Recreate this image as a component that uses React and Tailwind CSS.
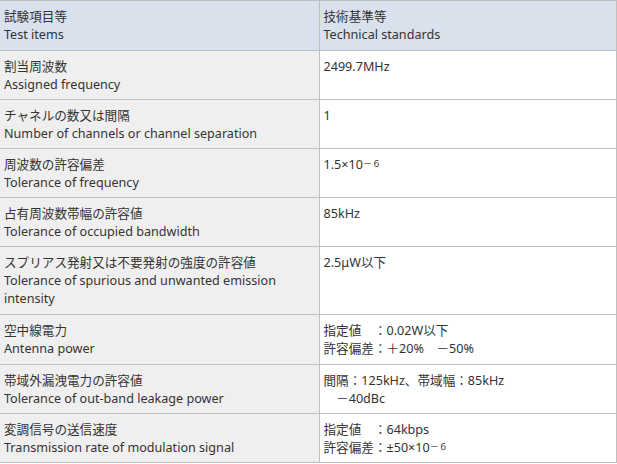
const rows = [
  { ja: "割当周波数", en: "Assigned frequency", value: ["2499.7MHz"] },
  { ja: "チャネルの数又は間隔", en: "Number of channels or channel separation", value: ["1"] },
  { ja: "周波数の許容偏差", en: "Tolerance of frequency", value: ["exp:1.5×10"] },
  { ja: "占有周波数帯幅の許容値", en: "Tolerance of occupied bandwidth", value: ["85kHz"] },
  {
    ja: "スプリアス発射又は不要発射の強度の許容値",
    en: "Tolerance of spurious and unwanted emission intensity",
    value: ["2.5μW以下"],
    tall: true,
  },
  { ja: "空中線電力", en: "Antenna power", value: ["指定値　：0.02W以下", "許容偏差：＋20%　－50%"], tall: true },
  {
    ja: "帯域外漏洩電力の許容値",
    en: "Tolerance of out-band leakage power",
    value: ["間隔：125kHz、帯域幅：85kHz", "　－40dBc"],
  },
  { ja: "変調信号の送信速度", en: "Transmission rate of modulation signal", value: ["指定値　：64kbps", "exp:許容偏差：±50×10"] },
];

function Line({ text }) {
  if (text.startsWith("exp:")) {
    return (
      <div>
        {text.slice(4)}
        <sup className="text-[9px] relative -top-[2px]">－６</sup>
      </div>
    );
  }
  return <div className="whitespace-pre">{text}</div>;
}

export default function App() {
  return (
    <div
      className="w-[617px] h-[464px] bg-white text-[#333] text-[12.6px] leading-[18px]"
      style={{ fontFamily: '"Noto Sans", "Noto Sans CJK JP", sans-serif' }}
    >
      <table className="w-[616px] border-collapse table-fixed">
        <colgroup>
          <col className="w-[319px]" />
          <col className="w-[297px]" />
        </colgroup>
        <thead>
          <tr className="bg-[#d8e1ec]">
            <th className="border-t border-b border-r border-[#c0c0c0] text-left font-normal align-top pl-[4px] pr-2 pt-[7px] pb-[6px]">
              <div>試験項目等</div>
              <div>Test items</div>
            </th>
            <th className="border-t border-b border-r border-[#c0c0c0] text-left font-normal align-top pl-[4px] pr-2 pt-[7px] pb-[6px]">
              <div>技術基準等</div>
              <div>Technical standards</div>
            </th>
          </tr>
        </thead>
        <tbody>
          {rows.map((r, i) => (
            <tr key={i}>
              <td
                className={`bg-[#efefef] border-b border-r border-[#c0c0c0] align-top pl-[4px] pr-2 pt-[7px] ${
                  r.tall ? "pb-[6px]" : "pb-[5px]"
                }`}
              >
                <div>{r.ja}</div>
                <div>{r.en}</div>
              </td>
              <td
                className={`bg-white border-b border-r border-[#c0c0c0] align-top pl-[4px] pr-2 pt-[7px] ${
                  r.tall ? "pb-[6px]" : "pb-[5px]"
                }`}
              >
                {r.value.map((v, j) => (
                  <Line key={j} text={v} />
                ))}
                {r.value.length === 1 && <div>&nbsp;</div>}
              </td>
            </tr>
          ))}
        </tbody>
      </table>
    </div>
  );
}
